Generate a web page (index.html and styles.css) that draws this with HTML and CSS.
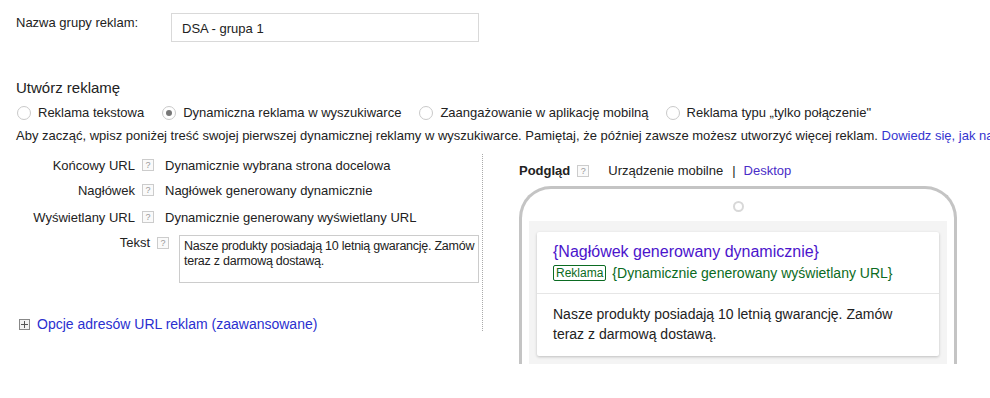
FILE: index.html
```html
<!DOCTYPE html>
<html lang="pl">
<head>
    <meta charset="UTF-8">
    <title>Nowa grupa reklam</title>
    <link rel="stylesheet" href="styles.css">
</head>
<body>
    <div class="page">
        <div class="name-row">
            <label class="name-label" for="groupName">Nazwa grupy reklam:</label>
            <div class="name-input" id="groupName">DSA - grupa 1</div>
        </div>

        <h2 class="section-title">Utwórz reklamę</h2>

        <div class="radio-row">
            <span class="radio-item"><span class="radio"></span>Reklama tekstowa</span>
            <span class="radio-item"><span class="radio checked"></span>Dynamiczna reklama w wyszukiwarce</span>
            <span class="radio-item"><span class="radio"></span>Zaangażowanie w aplikację mobilną</span>
            <span class="radio-item"><span class="radio"></span>Reklama typu „tylko połączenie"</span>
        </div>

        <p class="intro">Aby zacząć, wpisz poniżej treść swojej pierwszej dynamicznej reklamy w wyszukiwarce. Pamiętaj, że później zawsze możesz utworzyć więcej reklam. <a href="#">Dowiedz się, jak napisać skuteczną reklamę</a></p>

        <div class="editor">
            <div class="fields">
                <div class="field">
                    <span class="field-label">Końcowy URL</span>
                    <span class="help">?</span>
                    <span class="field-value">Dynamicznie wybrana strona docelowa</span>
                </div>
                <div class="field">
                    <span class="field-label">Nagłówek</span>
                    <span class="help">?</span>
                    <span class="field-value">Nagłówek generowany dynamicznie</span>
                </div>
                <div class="field">
                    <span class="field-label">Wyświetlany URL</span>
                    <span class="help">?</span>
                    <span class="field-value">Dynamicznie generowany wyświetlany URL</span>
                </div>
                <div class="field field-text">
                    <span class="field-label">Tekst</span>
                    <span class="help">?</span>
                    <div class="textarea">Nasze produkty posiadają 10 letnią gwarancję. Zamów teraz z darmową dostawą.</div>
                </div>

                <div class="advanced">
                    <span class="plus-box"></span>
                    <a href="#">Opcje adresów URL reklam (zaawansowane)</a>
                </div>
            </div>

            <div class="preview">
                <div class="preview-head">
                    <b>Podgląd</b>
                    <span class="help">?</span>
                    <span class="device">Urządzenie mobilne</span>
                    <span class="sep">|</span>
                    <a href="#">Desktop</a>
                </div>

                <div class="phone">
                    <div class="speaker"></div>
                    <div class="screen">
                        <div class="ad-card">
                            <div class="ad-top">
                                <div class="ad-headline">{Nagłówek generowany dynamicznie}</div>
                                <div class="ad-url"><span class="badge">Reklama</span>{Dynamicznie generowany wyświetlany URL}</div>
                            </div>
                            <div class="ad-body">Nasze produkty posiadają 10 letnią gwarancję. Zamów teraz z darmową dostawą.</div>
                        </div>
                    </div>
                </div>
            </div>
        </div>
    </div>
</body>
</html>
```

FILE: styles.css
```css
body {
    margin: 0;
    font-family: "Liberation Sans", Arial, sans-serif;
    font-size: 13px;
    color: #222;
    background: #fff;
    overflow: hidden;
}

a {
    color: #3535cf;
    text-decoration: none;
}

.page {
    padding: 13px 0 0 16px;
}

/* Nazwa grupy */
.name-row {
    display: flex;
    align-items: flex-start;
}

.name-label {
    width: 155px;
    padding-top: 2px;
}

.name-input {
    box-sizing: border-box;
    width: 308px;
    height: 29px;
    border: 1px solid #d9d9d9;
    padding: 7px 10px 0;
}

.section-title {
    font-size: 15px;
    font-weight: normal;
    margin: 37px 0 0;
    line-height: 18px;
}

/* Typ reklamy */
.radio-row {
    display: flex;
    margin-top: 7px;
    line-height: 18px;
}

.radio-item {
    display: flex;
    align-items: center;
    margin-right: 17px;
}

.radio-item:nth-child(3) {
    margin-right: 16px;
}

.radio {
    box-sizing: border-box;
    width: 14px;
    height: 14px;
    border: 1px solid #c9c9c9;
    border-radius: 50%;
    margin: 0 7px 0 1px;
    display: flex;
    align-items: center;
    justify-content: center;
}

.radio.checked::after {
    content: "";
    width: 6px;
    height: 6px;
    border-radius: 50%;
    background: #777;
}

.intro {
    margin: 6px 0 0;
    white-space: nowrap;
    line-height: 16px;
}

/* Edytor */
.editor {
    display: flex;
    margin-top: 9px;
}

.fields {
    box-sizing: border-box;
    width: 467px;
    height: 177px;
    margin-top: 1px;
    padding-top: 3px;
    border-right: 1px dotted #aaa;
}

.field {
    display: flex;
    align-items: center;
    height: 16px;
    margin-bottom: 9px;
}

.field:nth-child(2) {
    margin-bottom: 11px;
}

.field:nth-child(3) {
    margin-bottom: 10px;
}

.field-label {
    width: 119px;
    text-align: right;
}

.help {
    display: inline-flex;
    align-items: center;
    justify-content: center;
    box-sizing: border-box;
    width: 12px;
    height: 12px;
    border: 1px solid #ccc;
    color: #999;
    font-size: 9px;
    margin: 0 11px 0 7px;
    background: #fafafa;
}

.field-text {
    align-items: flex-start;
    height: auto;
    margin-bottom: 0;
}

.field-text .field-label {
    width: 134px;
}

.field-text .help {
    margin: 2px 10px 0 7px;
}

.textarea {
    box-sizing: border-box;
    width: 300px;
    height: 48px;
    border: 1px solid #ccc;
    padding: 3px 1px 3px 4px;
    font-size: 12.5px;
    line-height: 15px;
    letter-spacing: -0.25px;
}

.advanced {
    display: flex;
    align-items: center;
    margin-top: 33px;
    font-size: 14px;
}

.advanced a {
    color: #2a2fcf;
}

.plus-box {
    box-sizing: border-box;
    width: 11px;
    height: 11px;
    border: 1px solid #888;
    margin: 0 7px 0 3px;
    background:
        linear-gradient(#555, #555) center / 7px 1px no-repeat,
        linear-gradient(#555, #555) center / 1px 7px no-repeat,
        #f2f2f2;
}

/* Podgląd */
.preview {
    padding: 10px 0 0 36px;
}

.preview-head {
    display: flex;
    align-items: center;
    line-height: 16px;
}

.preview-head .help {
    margin: 0 19px 0 7px;
}

.sep {
    margin: 0 8px 0 9px;
}

.preview-head a {
    color: #4a2cc8;
}

.phone {
    box-sizing: border-box;
    width: 438px;
    height: 178px;
    margin-top: 7px;
    border: 3px solid #c4c4c4;
    border-bottom: none;
    border-radius: 32px 32px 0 0;
    padding: 0 7px;
}

.speaker {
    box-sizing: border-box;
    width: 11px;
    height: 11px;
    border: 2px solid #d8d8d8;
    border-radius: 50%;
    margin: 12px auto 0;
}

.screen {
    box-sizing: border-box;
    height: 144px;
    margin-top: 9px;
    padding: 11px 8px 0 8px;
    background: #f4f4f4;
}

.ad-card {
    height: 124px;
    background: #fff;
    border-radius: 2px;
    box-shadow: 0 1px 3px rgba(0, 0, 0, 0.22);
}

.ad-top {
    box-sizing: border-box;
    height: 62px;
    padding: 10px 16px 0;
    border-bottom: 1px solid #e6e6e6;
}

.ad-headline {
    font-size: 16px;
    line-height: 20px;
    color: #4b14cc;
}

.ad-url {
    display: flex;
    align-items: center;
    margin-top: 2px;
    font-size: 14px;
    line-height: 18px;
    color: #0b6b22;
}

.badge {
    border: 1px solid #0b6b22;
    border-radius: 2px;
    font-size: 12px;
    line-height: 14px;
    padding: 0 2px;
    margin-right: 6px;
}

.ad-body {
    padding: 10px 16px 0;
    font-size: 14px;
    line-height: 20px;
    color: #222;
}
```
